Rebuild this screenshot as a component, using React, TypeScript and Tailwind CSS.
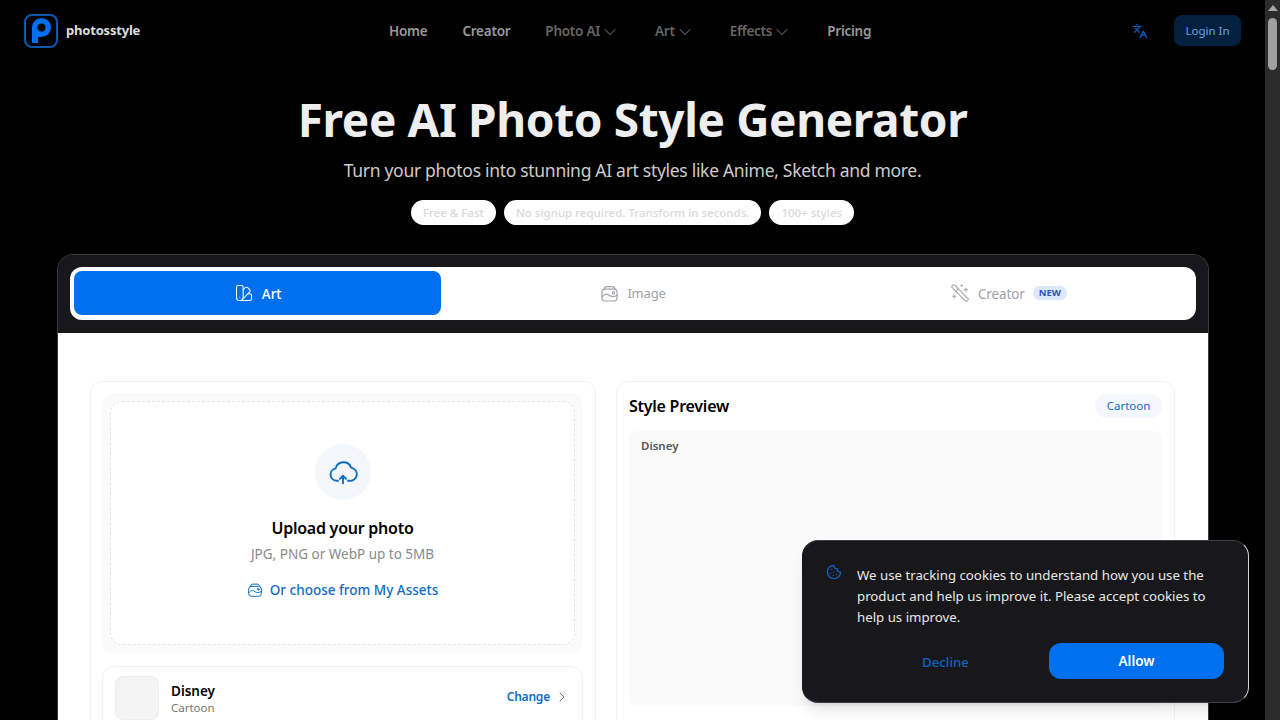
import { ChevronDown, ChevronRight, Cookie, Languages, SwatchBook, WandSparkles } from "lucide-react";

function WalletImage({ className }: { className: string }) {
    return (
        <svg viewBox="0 0 24 24" fill="none" stroke="currentColor" strokeWidth="1.5" strokeLinecap="round" strokeLinejoin="round" className={className}>
            <path d="M5 6.500C5.600 4 7 3.200 9 3.200h6c2 0 3.400.8 4 3.300" />
            <rect x="2.500" y="6.500" width="19" height="15" rx="4" />
            <path d="M2.800 16c3-3.500 5.500-4 8-2.200 2.500 1.800 6 3.200 10.500.7" />
            <circle cx="17" cy="11" r="1.500" />
        </svg>
    );
}

function NavLink({ label, dim, menu }: { label: string; dim?: boolean; menu?: boolean }) {
    return (
        <a className={`flex items-center text-[13.500px] font-semibold tracking-[-0.25px] ${dim ? "text-[#666]" : "text-[#999]"}`}>
            {label}
            {menu && <ChevronDown className="size-5 text-[#666]" strokeWidth={1.25} />}
        </a>
    );
}

function Header() {
    return (
        <header className="flex h-[61px] items-center pr-6 pl-6">
            <div className="flex w-[365px] items-center gap-2">
                <div className="flex size-[34px] items-center justify-center rounded-lg border-2 border-[#0b57b0] bg-black">
                    <svg viewBox="0 0 19 25" className="h-[25px] w-[19px]">
                        <path fillRule="evenodd" fill="#0070ee" d="M9.500 0a9.500 9.500 0 1 1 0 19H6v6H0V9.500A9.500 9.500 0 0 1 9.500 0zm0 5.500a4 4 0 1 0 0 8 4 4 0 0 0 0-8z" />
                    </svg>
                </div>
                <span className="text-[13px] font-bold tracking-[-0.2px] text-[#ddd]">photosstyle</span>
            </div>
            <nav className="mt-[2px] flex items-center gap-[35px]">
                <NavLink label="Home" />
                <NavLink label="Creator" />
                <NavLink label="Photo AI" dim menu />
                <NavLink label="Art" dim menu />
                <NavLink label="Effects" dim menu />
                <NavLink label="Pricing" />
            </nav>
            <Languages className="ml-auto size-4 text-[#0b57b0]" strokeWidth={2} />
            <button className="ml-[26px] h-[31px] w-[67px] rounded-lg bg-[#04203f] text-[11.500px] text-[#6ea4df]">Login In</button>
        </header>
    );
}

function Hero() {
    return (
        <section className="flex flex-col items-center pt-[26px]">
            <h1 className="text-[46px] leading-[64px] font-bold tracking-[-0.38px] text-[#eee]">Free AI Photo Style Generator</h1>
            <p className="mt-[5px] text-[17.500px] leading-7 tracking-[-0.3px] text-[#ccc]">Turn your photos into stunning AI art styles like Anime, Sketch and more.</p>
            <div className="mt-[16px] flex gap-2">
                {["Free & Fast", "No signup required. Transform in seconds.", "100+ styles"].map((t) => (
                    <span key={t} className="flex h-[25px] items-center rounded-full bg-white px-3 text-[11.500px] font-medium text-[#d9d9d9]">{t}</span>
                ))}
            </div>
        </section>
    );
}

function Tabs() {
    return (
        <div className="bg-[#18181b] p-3 pb-[13px]">
            <div className="grid h-[53px] grid-cols-3 gap-2 rounded-xl bg-white p-1 pb-[5px]">
                <div className="flex items-center justify-center gap-2 rounded-lg bg-[#0070ee] text-[13.500px] font-medium text-white">
                    <SwatchBook className="size-5" strokeWidth={1.25} />
                    <span className="mt-[2px]">Art</span>
                </div>
                <div className="flex items-center justify-center gap-2 text-[13px] tracking-[-0.2px] text-[#a1a1aa]">
                    <WalletImage className="size-[19px]" />
                    <span className="mt-[2px]">Image</span>
                </div>
                <div className="flex items-center justify-center gap-2 text-[13.500px] tracking-[-0.1px] text-[#a1a1aa]">
                    <WandSparkles className="size-5 -scale-x-100" strokeWidth={1.25} />
                    <span className="mt-[2px]">Creator</span>
                    <span className="rounded-full bg-[#dbe8fb] px-[6px] text-[9.500px] leading-[14px] font-bold text-[#2f55b0]">NEW</span>
                </div>
            </div>
        </div>
    );
}

function UploadPanel() {
    return (
        <div className="h-[500px] w-[506px] shrink-0 rounded-xl border border-[#f1f1f2] py-[11px] pr-3 pl-[11px]">
            <div className="rounded-xl bg-[#fafafa] p-2">
                <div className="flex h-[244px] flex-col items-center rounded-xl border border-dashed border-[#e4e4e7] bg-white pt-[42px]">
                    <div className="flex size-14 items-center justify-center rounded-full bg-[#f3f7fc]">
                        <svg viewBox="0 0 24 24" fill="none" stroke="#0f6cc4" strokeWidth="1.5" strokeLinecap="round" strokeLinejoin="round" className="size-[30px]">
                            <path d="M8 19H7a5 5 0 0 1-.9-9.900A6.500 6.500 0 0 1 18.500 8.500 5 5 0 0 1 17 19h-1" />
                            <path d="M12 21v-6m-2.500 2.500L12 15l2.500 2.500" />
                        </svg>
                    </div>
                    <h3 className="mt-[16px] text-[16px] leading-6 font-semibold tracking-[-0.25px] text-black">Upload your photo</h3>
                    <p className="mt-[4px] text-[13.500px] leading-5 text-[#8a8a8a]">JPG, PNG or WebP up to 5MB</p>
                    <a className="mt-4 flex items-center gap-[7px] text-[13.500px] leading-5 font-medium text-[#0f6cc4]">
                        <WalletImage className="size-4" />
                        Or choose from My Assets
                    </a>
                </div>
            </div>
            <div className="mt-[13px] flex items-center rounded-xl border border-[#f1f1f2] px-3 py-[9px]">
                <div className="size-11 rounded-lg border border-[#ececec] bg-[#f4f4f5]" />
                <div className="mt-[2px] ml-3">
                    <p className="text-[13.500px] leading-[18px] font-semibold text-black">Disney</p>
                    <p className="text-[11.500px] leading-4 text-[#777]">Cartoon</p>
                </div>
                <a className="-mt-[2px] ml-auto flex items-center gap-1 text-[12px] font-semibold tracking-[-0.2px] text-[#0f6cc4]">
                    Change
                    <ChevronRight className="size-4 text-[#555]" strokeWidth={1.25} />
                </a>
            </div>
        </div>
    );
}

function PreviewPanel() {
    return (
        <div className="h-[500px] flex-1 rounded-xl border border-[#f1f1f2] p-3">
            <div className="flex h-[24px] items-center justify-between">
                <h3 className="text-[16px] font-semibold tracking-[-0.25px] text-black">Style Preview</h3>
                <span className="flex h-[24px] w-[67px] items-center justify-center rounded-full bg-[#f4f8fc] text-[11.500px] text-[#0f6cc4]">Cartoon</span>
            </div>
            <div className="mt-[13px] h-[275px] rounded-lg bg-[#fafafa] px-3 py-[7px]">
                <p className="text-[11.500px] leading-4 font-semibold text-[#555]">Disney</p>
            </div>
        </div>
    );
}

function CookieBanner() {
    return (
        <div className="absolute top-[540px] left-[802px] w-[447px] rounded-2xl border border-[#d4d4d8] border-t-[#3f3f46] border-b-[#3f3f46] border-l-[#18181b] bg-[#18181b] pt-[23px] pr-6 pb-[23px] pl-[23px] shadow-lg">
            <div className="flex gap-[15px]">
                <Cookie className="size-4 shrink-0 text-[#0f5fc0]" strokeWidth={2} />
                <p className="mt-[1px] text-[13.250px] leading-[21px] text-[#e8e8e8]">
                    We use tracking cookies to understand how you use the product and help us improve it. Please accept cookies to help us improve.
                </p>
            </div>
            <div className="mt-[15px] flex items-center gap-4">
                <button className="ml-[32px] w-[175px] pt-[3px] text-[13.250px] font-medium text-[#0d62c6]">Decline</button>
                <button className="h-9 w-[175px] rounded-xl bg-[#0070ee] pt-px text-[13.500px] font-semibold text-white">Allow</button>
            </div>
        </div>
    );
}

function Scrollbar() {
    return (
        <div className="flex w-[15px] shrink-0 flex-col items-center bg-[#2c2c2c]">
            <div className="mt-[5px] h-0 w-0 border-x-[5px] border-b-[6px] border-x-transparent border-b-[#a8a8a8]" />
            <div className="mt-[7px] h-[52px] w-[9px] rounded-full bg-[#a0a0a0]" />
        </div>
    );
}

export default function App() {
    return (
        <div className="relative flex h-[720px] w-[1280px] overflow-hidden bg-black font-['Noto_Sans',sans-serif]">
            <div className="min-w-0 flex-1">
                <Header />
                <Hero />
                <main className="mt-[29px] mr-[56px] ml-[57px] overflow-hidden rounded-t-2xl border-x border-t border-[#3a3a3d]">
                    <Tabs />
                    <div className="flex gap-5 bg-white pt-[48px] pr-[33px] pb-8 pl-8">
                        <UploadPanel />
                        <PreviewPanel />
                    </div>
                </main>
            </div>
            <Scrollbar />
            <CookieBanner />
        </div>
    );
}
